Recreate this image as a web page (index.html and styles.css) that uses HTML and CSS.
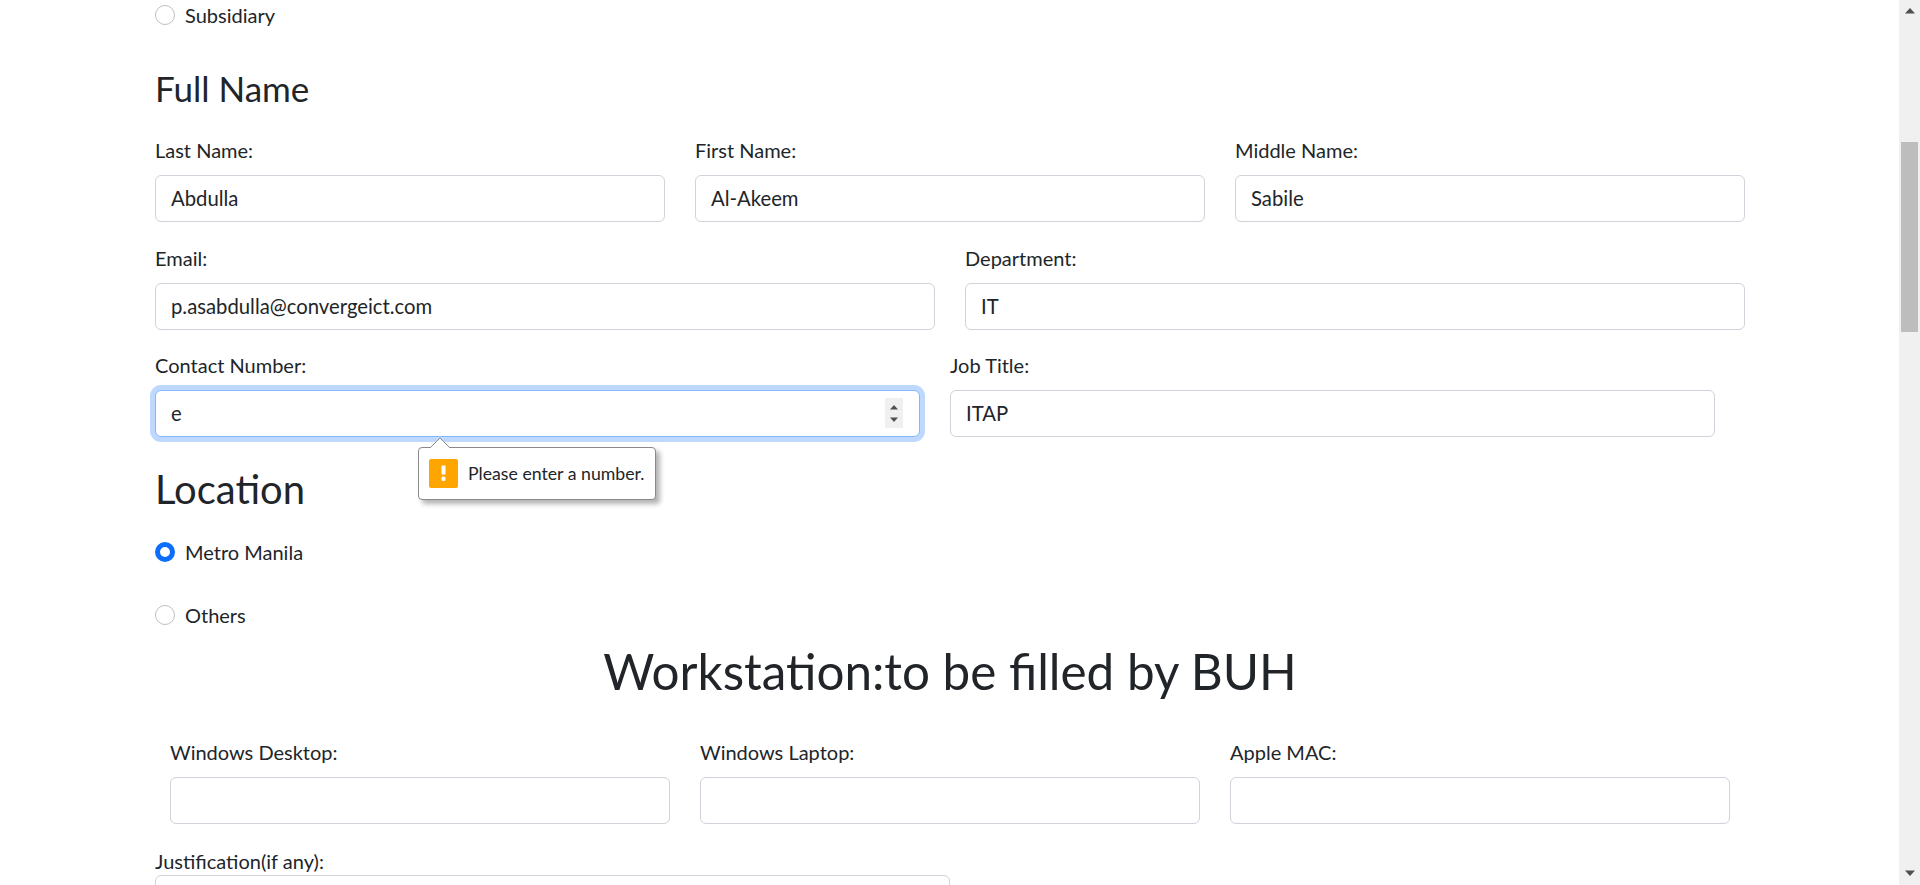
FILE: index.html
```html
<!DOCTYPE html>
<html lang="en">
<head>
<meta charset="utf-8">
<title>Request Form</title>
<link rel="stylesheet" href="styles.css">
</head>
<body>
<div class="page">
  <main class="form">
    <label class="radio radio-top"><span class="dot"></span>Subsidiary</label>
    <h3 class="h-full">Full Name</h3>
    <div class="row row-3">
      <div class="field"><label>Last Name:</label><div class="input">Abdulla</div></div>
      <div class="field"><label>First Name:</label><div class="input">Al-Akeem</div></div>
      <div class="field"><label>Middle Name:</label><div class="input">Sabile</div></div>
    </div>
    <div class="row row-2">
      <div class="field"><label>Email:</label><div class="input">p.asabdulla@convergeict.com</div></div>
      <div class="field"><label>Department:</label><div class="input">IT</div></div>
    </div>
    <div class="row row-contact">
      <div class="field field-tip">
        <label>Contact Number:</label>
        <div class="input focus">e
          <span class="spin"><svg viewBox="0 0 8 17" width="8" height="17"><path d="M4 0 8 4.500H0Z M0 12.500H8L4 17Z" fill="#505050"/></svg></span>
        </div>
        <div class="tip">
          <svg class="tip-arrow" viewBox="0 0 20 11" width="20" height="11"><path d="M0 11 10 1 20 11" fill="#fff" stroke="#8a8a8a"/></svg>
          <svg class="warn" viewBox="0 0 29 29" width="29" height="29"><rect width="29" height="29" rx="2" fill="#ffa500"/><rect x="12.500" y="6.500" width="4" height="9" fill="#fff"/><rect x="12.500" y="17.500" width="4" height="4.500" rx="1.500" fill="#fff"/></svg>
          <span class="tip-text">Please enter a number.</span>
        </div>
      </div>
      <div class="field"><label>Job Title:</label><div class="input">ITAP</div></div>
    </div>
    <h2 class="h-loc">Location</h2>
    <label class="radio radio-loc"><span class="dot on"></span>Metro Manila</label>
    <label class="radio radio-oth"><span class="dot"></span>Others</label>
    <h1 class="h-work">Workstation:to be filled by BUH</h1>
    <div class="row row-work">
      <div class="field"><label>Windows Desktop:</label><div class="input"></div></div>
      <div class="field"><label>Windows Laptop:</label><div class="input"></div></div>
      <div class="field"><label>Apple MAC:</label><div class="input"></div></div>
    </div>
    <div class="field field-just"><label>Justification(if any):</label><div class="input"></div></div>
  </main>
  <aside class="scrollbar">
    <svg class="arrow" viewBox="0 0 10 6" width="10" height="6"><path d="M5 0 10 5.500H0Z" fill="#505050"/></svg>
    <div class="thumb"></div>
    <svg class="arrow arrow-down" viewBox="0 0 10 6" width="10" height="6"><path d="M0 0.500H10L5 6Z" fill="#505050"/></svg>
  </aside>
</div>
</body>
</html>
```
FILE: styles.css
```css
* { box-sizing: border-box; }
html, body { margin: 0; height: 100%; overflow: hidden; background: #fff; }
body { font-family: Lato, "Open Sans", sans-serif; font-size: 20px; color: #212529; }
.page { display: flex; height: 885px; }
.form { flex: 1; padding: 0 184px 0 155px; overflow: hidden; }
.row { display: grid; column-gap: 30px; }
.row-3 { grid-template-columns: repeat(3, 510px); margin-top: 28px; }
.row-2 { grid-template-columns: 780px 780px; margin-top: 23px; }
.row-contact { grid-template-columns: 765px 765px; margin-top: 22px; }
.row-work { grid-template-columns: repeat(3, 500px); margin: 32px 0 0 15px; }
.field { display: flex; flex-direction: column; }
.field label { line-height: 26px; margin-bottom: 12px; }
.field-tip { position: relative; }
.field-just { width: 795px; margin-top: 23px; }
.field-just label { line-height: 28px; margin-bottom: 0; }
.input { height: 47px; border: 1px solid #ced4da; border-radius: 6px; padding: 0 15px; line-height: 45px; font-size: 20.300px; background: #fff; position: relative; }
.focus { border-color: #86b7fe; box-shadow: 0 0 0 5px #bfd9fe; }
.spin { position: absolute; right: 16px; top: 7px; width: 18px; height: 30px; background: #f0f0f0; display: flex; align-items: center; justify-content: center; }
.tip { position: absolute; left: 263px; top: 95px; width: 238px; height: 53px; display: flex; align-items: center; padding-left: 10px; background: #fff; border: 1px solid #8a8a8a; border-radius: 4px; box-shadow: 4px 4px 5px rgba(0,0,0,.3); z-index: 2; }
.tip-arrow { position: absolute; left: 11px; top: -11px; }
.warn { margin-right: 10px; flex: none; }
.tip-text { font-size: 17.700px; white-space: nowrap; }
.radio { display: flex; align-items: center; line-height: 30px; }
.dot { width: 20px; height: 20px; border-radius: 50%; border: 1px solid #bfbfbf; margin-right: 10px; background: #fff; }
.dot.on { border: 5px solid #0d6efd; }
.radio-top { margin-top: 0; }
.radio-loc { margin-top: 24px; }
.radio-oth { margin-top: 33px; }
h1, h2, h3 { margin: 0; font-weight: 400; }
.h-full { font-size: 35px; line-height: 42px; margin-top: 37px; }
.h-loc { font-size: 40px; line-height: 48px; margin-top: 28px; }
.h-work { font-size: 49.400px; line-height: 72px; margin-top: 5px; text-align: center; width: 1590px; }
.scrollbar { width: 21px; background: #f0f0f0; display: flex; flex-direction: column; align-items: center; flex: none; }
.arrow { margin-top: 8px; flex: none; }
.thumb { width: 17px; height: 190px; background: #bdbdbd; margin-top: 128px; flex: none; }
.arrow-down { margin-top: auto; margin-bottom: 9px; }
```
